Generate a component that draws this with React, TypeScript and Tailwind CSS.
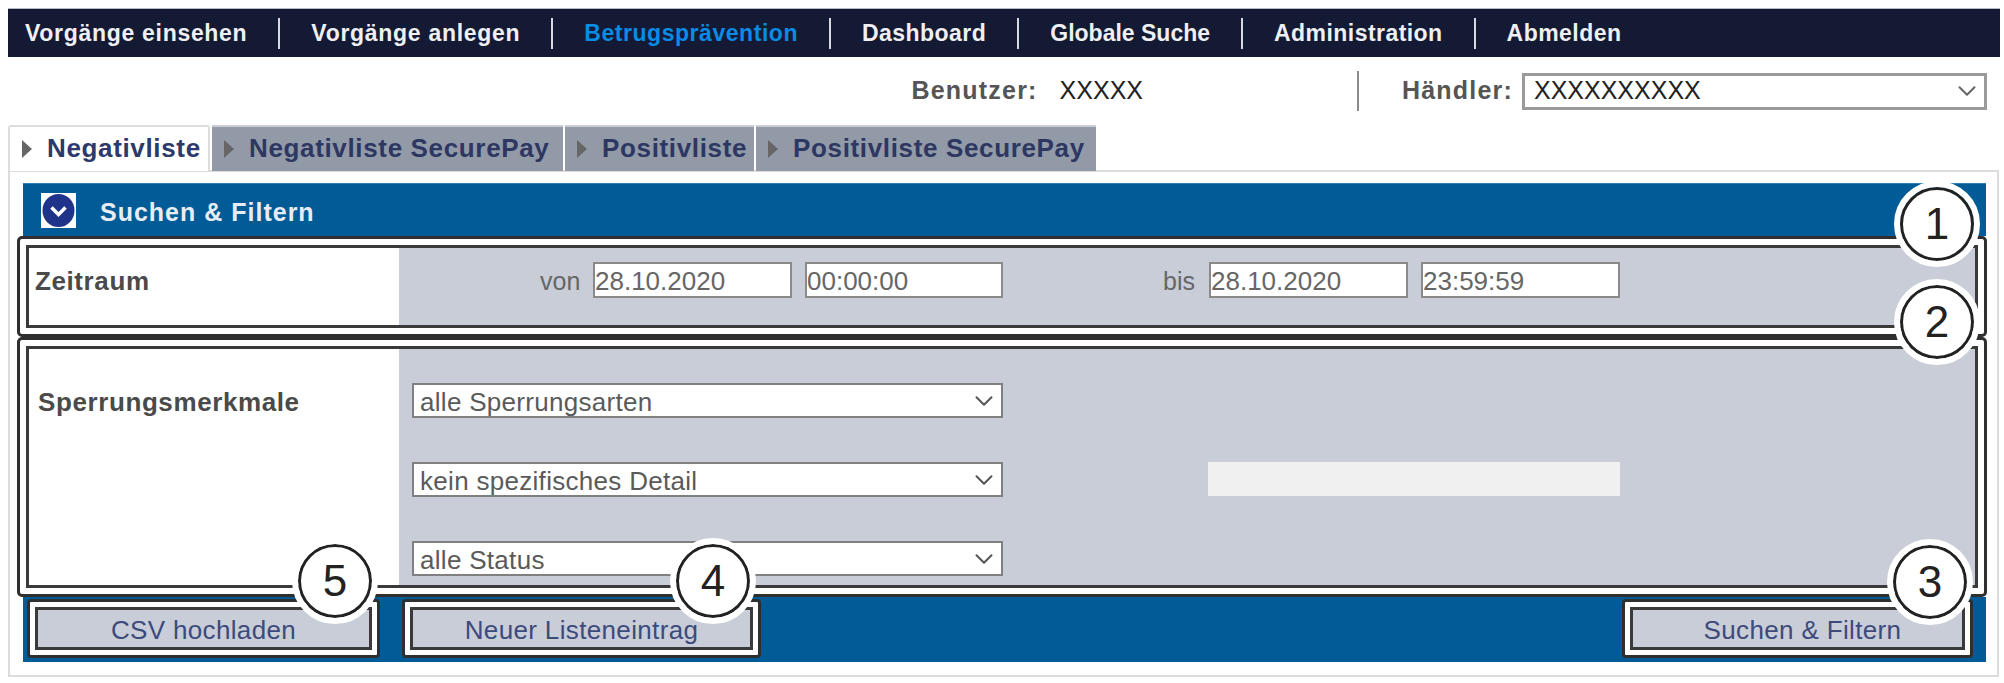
import { ChevronDown } from "lucide-react";

const navItems = [
  { label: "Vorgänge einsehen", tracking: "tracking-[0.7px]" },
  { label: "Vorgänge anlegen", tracking: "tracking-[0.7px]" },
  { label: "Betrugsprävention", tracking: "tracking-[0.55px]" },
  { label: "Dashboard", tracking: "tracking-[0.45px]" },
  { label: "Globale Suche", tracking: "tracking-[0px]" },
  { label: "Administration", tracking: "tracking-[0.45px]" },
  { label: "Abmelden", tracking: "tracking-[0.45px]" },
];

const tabs = [
  { label: "Negativliste", width: "w-[202px]", active: true },
  { label: "Negativliste SecurePay", width: "w-[351px]" },
  { label: "Positivliste", width: "w-[189px]" },
  { label: "Positivliste SecurePay", width: "w-[340px]" },
];

const callouts = [
  { n: 1, pos: "left-[1900px] top-[187px]" },
  { n: 2, pos: "left-[1900px] top-[285px]" },
  { n: 3, pos: "left-[1893px] top-[545px]" },
  { n: 4, pos: "left-[676px] top-[544px]" },
  { n: 5, pos: "left-[298px] top-[544px]" },
];

function Field({ value, className }: { value: string; className: string }) {
  return (
    <input
      readOnly
      value={value}
      className={`h-[36px] border-2 border-[#8a8a8a] bg-white pt-[2px] text-[26px] text-[#666] outline-none ${className}`}
    />
  );
}

function SelectBox({ value }: { value: string }) {
  return (
    <div className="flex h-[35px] w-[591px] items-center justify-between border-2 border-[#808080] bg-white pl-[6px] pr-[2px] pt-[3px] text-[26px] tracking-[0.3px] text-[#5a5a5a]">
      <span>{value}</span>
      <ChevronDown size={30} strokeWidth={1.6} className="-mt-[2px] text-[#555]" />
    </div>
  );
}

function Frame({ children, className }: { children: React.ReactNode; className: string }) {
  return (
    <div className={`-ml-[6px] -mr-[1px] rounded-[5px] border-[3px] border-[#2f2f2f] bg-white p-[6px] ${className}`}>
      <div className="flex h-full border-[3px] border-[#3a3a3a]">{children}</div>
    </div>
  );
}

function ActionButton({ label, className, inner = "" }: { label: string; className: string; inner?: string }) {
  return (
    <div className={`h-[59px] rounded-[4px] border-[3px] border-[#2f2f2f] bg-white p-[5px] ${className}`}>
      <div className={`flex h-full items-center justify-center border-[3px] border-[#3a3a3a] bg-[#c8cdd8] pt-[3px] text-[26px] tracking-[0.35px] text-[#3d4a7c] ${inner}`}>
        {label}
      </div>
    </div>
  );
}

export default function App() {
  return (
    <div className="relative h-[683px] w-[2004px] overflow-hidden bg-white font-['Liberation_Sans',Arial,sans-serif]">
      <nav className="ml-[8px] mr-[4px] mt-[8px] flex h-[49px] items-center border-t border-[#b9bcc6] bg-[#141a33] pl-[17px] text-[23px] font-bold">
        {navItems.map((item, i) => (
          <div key={item.label} className="flex h-[31px] items-center">
            <span className={`${item.tracking} ${item.label === "Betrugsprävention" ? "text-[#0a8be6]" : "text-[#eef0f4]"}`}>{item.label}</span>
            {i < navItems.length - 1 && <span className="mx-[31px] h-full w-[2px] bg-[#d8dae0]" />}
          </div>
        ))}
      </nav>

      <div className="mr-[17px] mt-[14px] flex h-[40px] items-center justify-end text-[25px]">
        <span className="font-bold tracking-[1.2px] text-[#555]">Benutzer:</span>
        <span className="ml-[22px] text-[#222]">XXXXX</span>
        <span className="ml-[214px] h-[40px] w-[2px] bg-[#8a8a8a]" />
        <span className="ml-[43px] font-bold tracking-[1.2px] text-[#555]">Händler:</span>
        <div className="ml-[9px] flex h-[37px] w-[465px] items-center justify-between border-[3px] border-[#9a9a9a] pl-[9px] pr-[2px] text-[#222]">
          <span>XXXXXXXXXX</span>
          <ChevronDown size={30} strokeWidth={1.6} className="text-[#666]" />
        </div>
      </div>

      <div className="ml-[8px] mt-[14px] flex h-[46px] gap-[2px]">
        {tabs.map((tab) => (
          <div
            key={tab.label}
            className={`flex items-center gap-[15px] pl-[12px] text-[26px] font-bold tracking-[0.65px] ${tab.width} ${
              tab.active
                ? "z-10 rounded-t-[3px] border-x-2 border-t-2 border-[#dddddd] bg-white text-[#2b3a6b]"
                : "border-t-2 border-[#c9cdd3] bg-[#929aa8] text-[#2d3762]"
            }`}
          >
            <span className="h-0 w-0 border-y-[9px] border-l-[10px] border-y-transparent border-l-[#666]" />
            <span className="-mt-[1px]">{tab.label}</span>
          </div>
        ))}
      </div>

      <main className="ml-[8px] mr-[5px] -mt-[1px] h-[507px] border-2 border-[#dcdcdc] px-[13px] pt-[11px]">
        <div className="mr-[-2px]">
          <div className="flex h-[53px] items-center border-t border-[#2f7fb0] bg-[#005b96] pl-[18px]">
            <div className="flex h-[35px] w-[35px] items-center justify-center bg-white">
              <svg viewBox="0 0 35 35" className="h-[35px] w-[35px]">
                <ellipse cx="17.5" cy="17.5" rx="16" ry="16.5" fill="#20338a" />
                <path d="M10.5 14.5 L17.5 21.5 L24.5 14.5" fill="none" stroke="#fff" strokeWidth="3.5" />
              </svg>
            </div>
            <span className="ml-[24px] pt-[6px] text-[25px] font-bold tracking-[1px] text-[#e8edf5]">Suchen &amp; Filtern</span>
          </div>

          <Frame className="h-[101px]">
            <div className="w-[370px] bg-white pl-[6px] pt-[14px] text-[26px] font-bold tracking-[0.6px] text-[#4a4a4a]">Zeitraum</div>
            <div className="flex flex-1 items-start bg-[#c8cdd8] pl-[141px] pt-[14px] text-[25px] text-[#666]">
              <span className="mt-[1px] w-[53px]">von</span>
              <Field value="28.10.2020" className="w-[199px]" />
              <Field value="00:00:00" className="ml-[13px] w-[198px]" />
              <span className="ml-[160px] mt-[1px] w-[46px]">bis</span>
              <Field value="28.10.2020" className="w-[199px]" />
              <Field value="23:59:59" className="ml-[13px] w-[199px]" />
            </div>
          </Frame>

          <Frame className="h-[260px]">
            <div className="w-[370px] bg-white pl-[9px] pt-[34px] text-[26px] font-bold tracking-[0.6px] text-[#4a4a4a]">Sperrungsmerkmale</div>
            <div className="flex flex-1 bg-[#c8cdd8] pl-[13px] pt-[34px]">
              <div className="flex flex-col gap-[44px]">
                <SelectBox value="alle Sperrungsarten" />
                <SelectBox value="kein spezifisches Detail" />
                <SelectBox value="alle Status" />
              </div>
              <div className="ml-[205px] mt-[79px] h-[34px] w-[412px] bg-[#f0f0f0]" />
            </div>
          </Frame>

          <footer className="flex h-[65px] bg-[#005b96] pl-[4px] pr-[13px] pt-[2px]">
            <ActionButton label="CSV hochladen" className="w-[353px]" />
            <ActionButton label="Neuer Listeneintrag" className="ml-[22px] w-[359px]" />
            <ActionButton label="Suchen & Filtern" className="ml-auto w-[351px]" inner="pl-[10px]" />
          </footer>
        </div>
      </main>

      {callouts.map((c) => (
        <div
          key={c.n}
          className={`absolute flex h-[74px] w-[74px] items-center justify-center rounded-full border-[3px] border-[#222] bg-white text-[44px] text-[#222] outline-[6px] outline-white ${c.pos}`}
        >
          {c.n}
        </div>
      ))}
    </div>
  );
}
